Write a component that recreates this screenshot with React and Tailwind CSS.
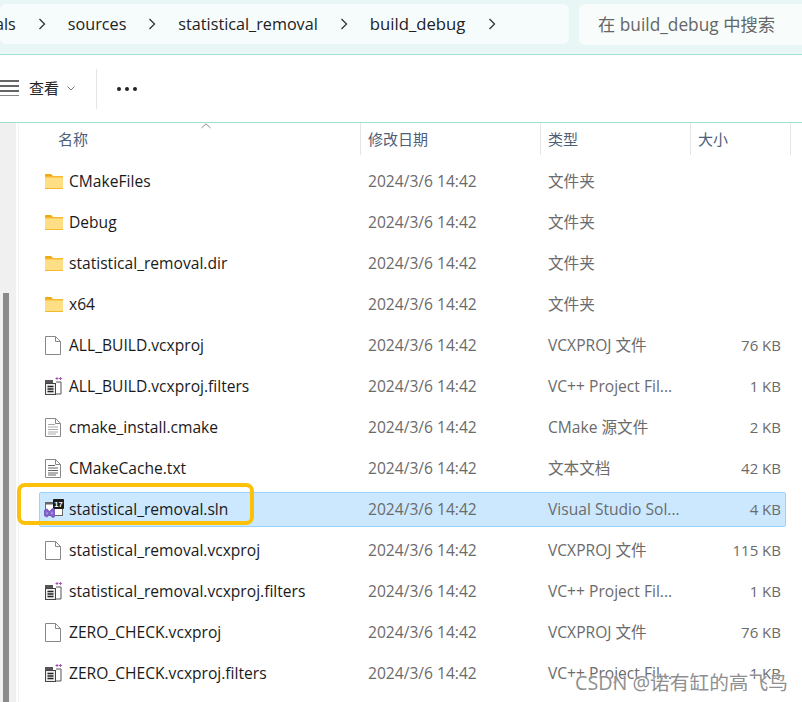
import React from "react";

const files = [
  { name: "CMakeFiles", type: "文件夹", size: "", icon: "folder" },
  { name: "Debug", type: "文件夹", size: "", icon: "folder" },
  { name: "statistical_removal.dir", type: "文件夹", size: "", icon: "folder" },
  { name: "x64", type: "文件夹", size: "", icon: "folder" },
  { name: "ALL_BUILD.vcxproj", type: "VCXPROJ 文件", size: "76 KB", icon: "blank" },
  { name: "ALL_BUILD.vcxproj.filters", type: "VC++ Project Fil...", size: "1 KB", icon: "filters" },
  { name: "cmake_install.cmake", type: "CMake 源文件", size: "2 KB", icon: "lines" },
  { name: "CMakeCache.txt", type: "文本文档", size: "42 KB", icon: "text" },
  { name: "statistical_removal.sln", type: "Visual Studio Sol...", size: "4 KB", icon: "sln", selected: true },
  { name: "statistical_removal.vcxproj", type: "VCXPROJ 文件", size: "115 KB", icon: "blank" },
  { name: "statistical_removal.vcxproj.filters", type: "VC++ Project Fil...", size: "1 KB", icon: "filters" },
  { name: "ZERO_CHECK.vcxproj", type: "VCXPROJ 文件", size: "76 KB", icon: "blank" },
  { name: "ZERO_CHECK.vcxproj.filters", type: "VC++ Project Fil...", size: "1 KB", icon: "filters" },
];

const Chevron = () => (
  <svg width="8" height="12" viewBox="0 0 8 12" fill="none" stroke="#333" strokeWidth="1.3">
    <path d="M1.5 1 L6.5 6 L1.5 11" />
  </svg>
);

const FileIcon = ({ type }) => {
  if (type === "folder") {
    return (
      <svg width="18" height="15" viewBox="0 0 18 15">
        <path d="M0 1 Q0 0 1 0 H6 L8 2 H0 Z" fill="#f0a80f" />
        <rect x="0" y="2" width="18" height="13" fill="#f5b82e" />
        <rect x="0" y="3.5" width="18" height="10.5" fill="#ffdf85" />
      </svg>
    );
  }
  if (type === "filters") {
    return (
      <svg width="17" height="18" viewBox="0 0 17 18">
        <path d="M10.500 1.500h3M12 0v3M14 1.500h3M15.500 0v3" stroke="#a855b5" strokeWidth="1" />
        <path d="M0 3h8v3H0z" fill="#555" />
        <path d="M11 5h5v12h-5" fill="none" stroke="#555" />
        <rect x="0.500" y="6.500" width="10" height="11" fill="#eee" stroke="#444" />
        <path d="M2.500 9.500h6M2.500 12h6M2.500 14.500h6" stroke="#222" strokeWidth="1.300" />
      </svg>
    );
  }
  if (type === "sln") {
    return (
      <svg width="20" height="20" viewBox="0 0 20 20">
        <rect x="1.500" y="3.500" width="17" height="13" fill="#fff" stroke="#666" />
        <rect x="1.500" y="3.500" width="17" height="2" fill="#666" />
        <rect x="9" y="0" width="11" height="10" rx="1" fill="#1b1b1b" />
        <text x="14.500" y="7.700" fontSize="7.500" fontWeight="700" fill="#fff" textAnchor="middle" fontFamily="Liberation Sans, sans-serif">17</text>
        <path d="M0 11 L3 9.500 L5.500 12 L8.500 9 L11 10 V18 L8.500 19 L5.500 16 L3 18.500 L0 17 Z" fill="#7f5fc4" />
        <path d="M2.500 12.500 V16 L4.200 14.200 Z M8.500 12 L6.800 14.200 L8.500 16 Z" fill="#b9a5e3" />
      </svg>
    );
  }
  const lineColor = type === "text" ? "#666" : "#aaa";
  return (
    <svg width="16" height="19" viewBox="0 0 16 19">
      <path d="M0.500 0.500H10.500L15.500 5.500V18.500H0.500Z" fill="#fff" stroke="#888" />
      <path d="M10.500 0.500V5.500H15.500" fill="none" stroke="#888" />
      {type !== "blank" && (
        <path d="M3 6.500h7M3 9h10M3 11.500h10M3 14h10M3 16h8" stroke={lineColor} strokeWidth="1" />
      )}
    </svg>
  );
};

const HeaderCell = ({ children, className }) => (
  <div className={`h-8 flex items-center text-[15px] text-[#4c607a] border-r border-[#e5e5e5] ${className}`}>{children}</div>
);

export default function App() {
  return (
    <div
      className="relative w-[802px] h-[702px] overflow-hidden bg-white text-[15.6px]"
      style={{ fontFamily: '"Open Sans", "Noto Sans CJK SC", sans-serif' }}
    >
      {/* address bar */}
      <div className="h-[55px] bg-[#e8f7f5] border-b border-[#a5dfd0] pt-1 flex gap-[10px]">
        <div className="w-[569px] h-10 shrink-0 bg-[#f6fcfb] rounded-md flex items-center text-[16.2px] text-[#222]">
          <span className="ml-[-5px]">als</span>
          <span className="ml-[22px]"><Chevron /></span>
          <span className="ml-[22px]">sources</span>
          <span className="ml-[22px]"><Chevron /></span>
          <span className="ml-[22px]">statistical_removal</span>
          <span className="ml-[22px]"><Chevron /></span>
          <span className="ml-[22px] text-[16.7px]">build_debug</span>
          <span className="ml-[23px]"><Chevron /></span>
        </div>
        <div className="flex-1 h-[41px] bg-[#f8fdfc] rounded-l-md flex items-center pl-[19px] text-[17.3px] text-[#666] whitespace-nowrap">
          在 build_debug 中搜索
        </div>
      </div>

      {/* toolbar */}
      <div className="h-[68px] border-b border-[#a5dfd0] flex items-center">
        <div className="w-[19px] flex flex-col gap-[3px] mt-[-1px]">
          <div className="h-[2px] bg-[#666]" />
          <div className="h-[2px] bg-[#666]" />
          <div className="h-[2px] bg-[#666]" />
          <div className="h-px bg-[#888]" />
        </div>
        <span className="ml-[10px] text-[15px] text-[#222]">查看</span>
        <svg className="ml-[8px]" width="8" height="5" viewBox="0 0 8 5" fill="none" stroke="#777">
          <path d="M0.500 0.500L4 4L7.500 0.500" />
        </svg>
        <div className="ml-[21px] w-px h-10 bg-[#e5e5e5]" />
        <div className="ml-5 flex gap-[4px]">
          <div className="w-[4px] h-[4px] rounded-full bg-[#222]" />
          <div className="w-[4px] h-[4px] rounded-full bg-[#222]" />
          <div className="w-[4px] h-[4px] rounded-full bg-[#222]" />
        </div>
      </div>

      {/* body */}
      <div className="flex h-[579px]">
        <div className="w-4 shrink-0 bg-[#f0f0f0] flex flex-col pl-[3px] pt-[170px]">
          <div className="w-[6px] flex-1 bg-[#8a8a8a]" />
        </div>
        <div className="flex-1 min-w-0 border-l-2 border-white">
          <div className="relative border-l border-[#f3f3f3] h-full">
            {/* column header */}
            <div className="grid grid-cols-[342px_180px_150px_100px]">
              <HeaderCell className="pl-[39px]">名称</HeaderCell>
              <HeaderCell className="pl-[7px]">修改日期</HeaderCell>
              <HeaderCell className="pl-[7px]">类型</HeaderCell>
              <HeaderCell className="pl-[7px]">大小</HeaderCell>
            </div>
            <svg className="absolute left-[182px] top-0" width="10" height="6" viewBox="0 0 10 6" fill="none" stroke="#888">
              <path d="M0.500 5L5 0.800L9.500 5" />
            </svg>

            {/* rows */}
            <div className="pl-[20px] pt-[9px] flex flex-col gap-[6px] w-[767px]">
              {files.map((f) => (
                <div
                  key={f.name}
                  className={`h-[35px] grid grid-cols-[321px_180px_150px_95px] items-center rounded-[2px] border ${
                    f.selected ? "bg-[#cce8ff] border-[#99d1ff]" : "border-transparent"
                  }`}
                >
                  <div className="flex items-center pl-[4px] min-w-0">
                    <div className={`w-[25px] shrink-0 flex ${f.icon === "sln" ? "" : "pl-px"}`}>
                      <FileIcon type={f.icon} />
                    </div>
                    <span className="text-[#1a1a1a] whitespace-nowrap">{f.name}</span>
                  </div>
                  <div className="pl-[7px] text-[#6b6b6b] whitespace-nowrap">2024/3/6 14:42</div>
                  <div className="pl-[7px] text-[#6b6b6b] whitespace-nowrap">{f.type}</div>
                  <div className="pr-[5px] text-right text-[15px] text-[#6b6b6b] whitespace-nowrap">{f.size}</div>
                </div>
              ))}
            </div>
          </div>
        </div>
      </div>

      {/* annotation over the selected row */}
      <div className="absolute left-[17px] top-[483px] w-[237px] h-[42px] border-[4px] border-[#ffc107] rounded-[8px]" />

      {/* watermark */}
      <div className="absolute left-[575px] top-[669px] text-[19.7px] leading-[28px] text-[#8f8f8f] whitespace-nowrap [text-shadow:0_0_2px_#fff]">
        CSDN @诺有缸的高飞鸟
      </div>
    </div>
  );
}
